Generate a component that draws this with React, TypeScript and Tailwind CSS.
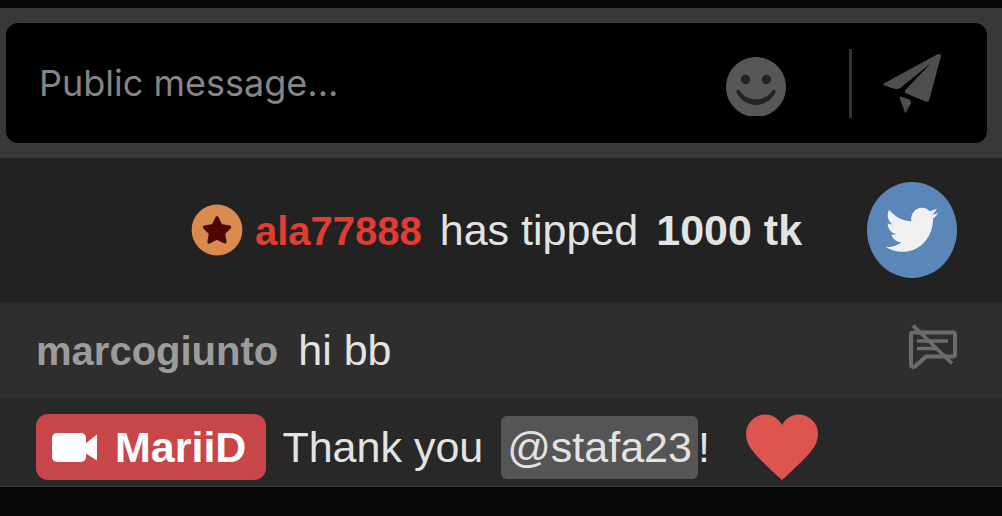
import type { ReactNode } from 'react';

function SmileIcon() {
  return (
    <svg viewBox="0 0 60 60" className="size-15" aria-hidden="true">
      <path d="M22 59A30 30 0 1 1 38 59Z" fill="#575757" />
      <circle cx="19.5" cy="22.5" r="4.7" fill="#232323" />
      <circle cx="40.5" cy="22.5" r="4.7" fill="#232323" />
      <path
        d="M10.5 34.5C10.5 32.5 13 32.3 14 34C21 45 39 45 46 34C47 32.3 49.5 32.5 49.5 34.5C48 41 39 48 30 48C21 48 12 41 10.5 34.5Z"
        fill="#232323"
      />
    </svg>
  );
}

function SendIcon() {
  return (
    <svg viewBox="0 0 58 60" className="h-15 w-[58px]" fill="#4e4e4e" aria-hidden="true">
      <path d="M1.2 30.2L54.5 1.2Q58.4 -.2 57.8 3.6L46.4 46.4Q45.6 49.4 42.6 48.4L23.2 40.6Q20.6 39.2 22.4 37L47.6 10.6L17.2 35Q14.6 36.8 11.4 35.8L1.4 32.6Q-.8 31.4 1.2 30.2Z" />
      <path d="M18 43.6L25.6 46.2Q28.6 47.5 27.8 50.6L22.3 60.5L17 46Q16.4 43.2 18 43.6Z" />
    </svg>
  );
}

function StarBadge() {
  return (
    <svg viewBox="0 0 52 52" className="size-[52px] shrink-0" aria-hidden="true">
      <circle cx="26" cy="26" r="25.4" fill="#d98a4e" />
      <path
        d="M26 13.8L29.8 21.7L38.6 23.2L32.5 29.3L34 38L26 34.1L18 38L19.5 29.3L13.4 23.2L22.2 21.7Z"
        fill="#4d0606"
        stroke="#4d0606"
        strokeWidth="3.2"
        strokeLinejoin="round"
      />
    </svg>
  );
}

function TwitterIcon() {
  return (
    <svg viewBox="0 0 90 96" className="h-24 w-[90px]" aria-hidden="true">
      <ellipse cx="45" cy="48" rx="45" ry="48" fill="#5b87b8" />
      <g transform="translate(18.5 20.6) scale(2.2 2.26)" fill="#f1f1f1">
        <path d="M23.953 4.57a10 10 0 01-2.825.775 4.958 4.958 0 002.163-2.723c-.951.555-2.005.959-3.127 1.184a4.92 4.92 0 00-8.384 4.482C7.69 8.095 4.067 6.13 1.64 3.162a4.822 4.822 0 00-.666 2.475c0 1.71.87 3.213 2.188 4.096a4.904 4.904 0 01-2.228-.616v.06a4.923 4.923 0 003.946 4.827 4.996 4.996 0 01-2.212.085 4.936 4.936 0 004.604 3.417 9.867 9.867 0 01-6.102 2.105c-.39 0-.779-.023-1.17-.067a13.995 13.995 0 007.557 2.209c9.053 0 13.998-7.496 13.998-13.985 0-.21 0-.42-.015-.63A9.935 9.935 0 0024 4.59z" />
      </g>
    </svg>
  );
}

function MuteIcon() {
  return (
    <svg
      viewBox="0 0 48 46"
      className="h-[46px] w-12"
      fill="none"
      stroke="#6c6c6c"
      strokeWidth="4"
      strokeLinejoin="round"
      aria-hidden="true"
    >
      <path d="M4 9.5H44Q46 9.5 46 11.5V31.5Q46 33.5 44 33.5H17L6 43.5Q2 45 2 41V11.5Q2 9.5 4 9.5Z" />
      <path d="M8 18H39M8 25.5H27" strokeWidth="3.6" />
      <path d="M4 2.5L43 40.5" strokeWidth="3.6" />
    </svg>
  );
}

function CameraIcon() {
  return (
    <svg viewBox="0 0 45 29" className="h-[29px] w-[45px]" fill="#fff" aria-hidden="true">
      <rect width="34" height="29" rx="5" />
      <path d="M33 11L45 1.5V27.5L33 20Z" />
    </svg>
  );
}

function HeartIcon() {
  return (
    <svg viewBox="0 0 72 66" className="h-[66px] w-[72px]" role="img" aria-label="heart">
      <path
        d="M36 66C24 55 13 45 6 36C-2 26 -2 13 6 6C14 -2 29 -2 36 11C43 -2 58 -2 66 6C74 13 74 26 66 36C59 45 48 55 36 66Z"
        fill="#de554f"
      />
    </svg>
  );
}

function Username({ className, children }: { className: string; children: ReactNode }) {
  return <span className={`text-[40px] font-bold ${className}`}>{children}</span>;
}

export default function App() {
  return (
    <div className="min-h-screen bg-[#070707] pt-2 font-['Liberation_Sans',Arial,sans-serif] text-[43px] leading-12 text-[#e3e3e3]">
      {/* Message input */}
      <form className="bg-[#383838] py-[15px] pr-[15px] pl-1.5" onSubmit={(e) => e.preventDefault()}>
        <div className="flex h-30 items-center rounded-xl bg-black pr-[46px] pl-[33px]">
          <input
            type="text"
            aria-label="Public message"
            placeholder="Public message..."
            className="h-16 min-w-0 flex-1 bg-transparent font-[Inter,sans-serif] text-[36px] text-[#ddd] outline-none placeholder:text-[#858585]"
          />
          <button type="button" aria-label="Emoji" className="mt-2">
            <SmileIcon />
          </button>
          <div className="mr-[31px] ml-[63px] h-[69px] w-[3px] bg-[#333]" />
          <button type="submit" aria-label="Send">
            <SendIcon />
          </button>
        </div>
      </form>

      {/* Tip */}
      <div className="grid h-36 grid-cols-[90px_1fr_90px] items-center bg-[#222] pr-[45px] pl-9">
        <div className="col-start-2 flex items-center justify-center gap-3 whitespace-nowrap">
          <StarBadge />
          <p className="flex items-baseline gap-[18px]">
            <Username className="text-[#e23d33]">ala77888</Username>
            <span>has tipped</span>
            <b>1000 tk</b>
          </p>
        </div>
        <a href="#twitter" aria-label="Twitter">
          <TwitterIcon />
        </a>
      </div>

      {/* Messages */}
      <div className="flex h-24 items-center justify-between bg-[#2e2e2e] pr-[45px] pl-9">
        <p className="flex items-baseline gap-5">
          <Username className="text-[#9c9c9c]">marcogiunto</Username>
          <span>hi bb</span>
        </p>
        <button type="button" aria-label="Mute user" className="pb-2">
          <MuteIcon />
        </button>
      </div>
      <div className="flex h-[89px] items-center border-b border-[#3b3b3b] bg-[#282828] pt-2.5 pl-9 whitespace-nowrap">
        <span className="flex h-[66px] items-center gap-[18px] rounded-xl bg-[#c8454a] pr-5 pl-4 font-bold text-white">
          <CameraIcon />
          MariiD
        </span>
        <span className="ml-4">Thank you</span>
        <span className="ml-[18px] flex h-[63px] items-center rounded-md bg-[#555] px-1.5">@stafa23</span>
        <span>!</span>
        <span className="ml-9">
          <HeartIcon />
        </span>
      </div>
    </div>
  );
}
